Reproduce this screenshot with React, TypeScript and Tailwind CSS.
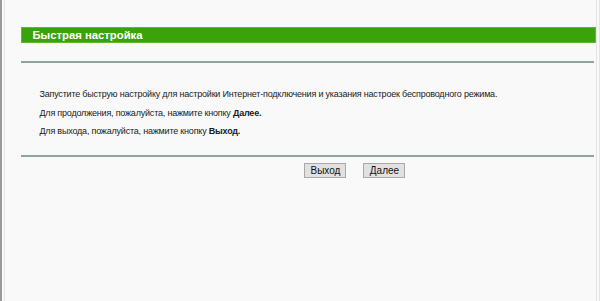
import React from "react";

export default function App() {
  return (
    <div className="w-[600px] h-[301px] bg-[#f9f9f9] flex overflow-hidden" style={{ fontFamily: '"Liberation Sans", Arial, sans-serif' }}>
      <div className="w-[2px] bg-[#9a9a9a]" />
      <div className="w-[2px] bg-[#f9f9f9]" />
      <div className="w-[1px] bg-[#e4e4e4]" />
      <div className="flex-1 flex flex-col pl-[17px] pt-[27px]">
        <div className="h-[16px] bg-[#3aa30b] border border-[#5dbb33] flex items-center pl-[10px] text-white text-[11.3px] font-bold w-[575px]">
          Быстрая настройка
        </div>
        <div className="h-[2px] bg-[#8da59b] mt-[18px] w-[573px]" />
        <div className="pl-[18px] pt-[26px] text-[9px] tracking-[-0.2px] text-[#1a1a1a] flex flex-col gap-[7.5px] leading-[11px]">
          <div>Запустите быструю настройку для настройки Интернет-подключения и указания настроек беспроводного режима.</div>
          <div>Для продолжения, пожалуйста, нажмите кнопку <b>Далее.</b></div>
          <div>Для выхода, пожалуйста, нажмите кнопку <b>Выход.</b></div>
        </div>
        <div className="h-[2px] bg-[#8da59b] mt-[18px] w-[573px]" />
        <div className="flex gap-[17px] pl-[283px] pt-[6px]">
          <button className="w-[42px] h-[15px] bg-[#e1e1e1] border border-[#a9a9a9] text-[10px] text-[#111] flex items-center justify-center leading-none">Выход</button>
          <button className="w-[42px] h-[15px] bg-[#e1e1e1] border border-[#a9a9a9] text-[10px] text-[#111] flex items-center justify-center leading-none">Далее</button>
        </div>
      </div>
      <div className="w-[1px] bg-[#e4e4e4]" />
      <div className="w-[2px] bg-[#f9f9f9]" />
      <div className="w-[1px] bg-[#e4e4e4]" />
    </div>
  );
}
